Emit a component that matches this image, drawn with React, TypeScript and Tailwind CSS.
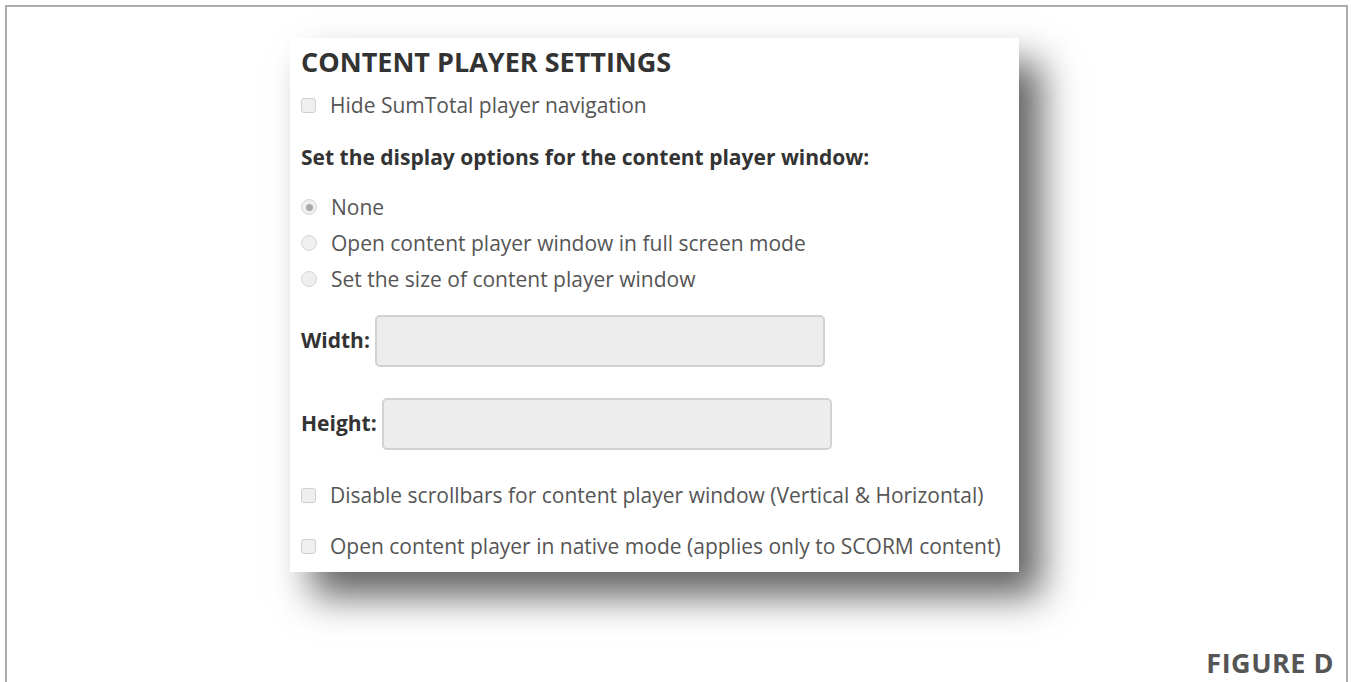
import React from "react";

// Checkbox drawn as a flat light square, like the disabled-looking browser control
function Box() {
  return (
    <span className="inline-block w-[15px] h-[15px] rounded-[3px] border border-[#cfcfcf] bg-[#efefef] shrink-0" />
  );
}

// Radio circle; the selected one gets a grey dot in the middle
function Radio({ checked }: { checked?: boolean }) {
  return (
    <span className="w-[16px] h-[16px] rounded-full border border-[#d6d6d6] bg-[#efefef] shrink-0 flex items-center justify-center">
      {checked && <span className="w-[7px] h-[7px] rounded-full bg-[#a9a9a9]" />}
    </span>
  );
}

const radios = [
  { label: "None", checked: true },
  { label: "Open content player window in full screen mode" },
  { label: "Set the size of content player window" },
];

export default function App() {
  return (
    <div
      className="w-[1351px] h-[682px] bg-white overflow-hidden pt-[5px] pl-[5px] pr-[3px]"
      style={{ fontFamily: '"Open Sans", "Noto Sans", Arial, sans-serif' }}
    >
      <div className="h-[690px] border-2 border-b-0 border-[#ababab] flex flex-col">
        <div className="ml-[283px] mt-[31px] w-[729px] h-[534px] bg-white shadow-[22px_24px_36px_rgba(0,0,0,0.62)] pl-[11px] pt-[8px]">
          <h1 className="text-[27px] leading-[32px] font-bold text-[#333]">CONTENT PLAYER SETTINGS</h1>

          <label className="mt-[13px] flex items-center gap-[14px] text-[21px] leading-[28px] text-[#555]">
            <Box />
            Hide SumTotal player navigation
          </label>

          <p className="mt-[24px] text-[21px] leading-[28px] font-bold text-[#333]">
            Set the display options for the content player window:
          </p>

          <div className="mt-[18px] flex flex-col">
            {radios.map((r) => (
              <label key={r.label} className="flex items-center gap-[14px] text-[21px] leading-[36px] text-[#555]">
                <Radio checked={r.checked} />
                {r.label}
              </label>
            ))}
          </div>

          <div className="mt-[18px] flex items-center gap-[5px]">
            <span className="text-[21px] font-bold text-[#333]">Width:</span>
            <div className="w-[450px] h-[52px] rounded-[5px] border-2 border-[#d2d2d2] bg-[#ededed]" />
          </div>

          <div className="mt-[31px] flex items-center gap-[5px]">
            <span className="text-[21px] font-bold text-[#333]">Height:</span>
            <div className="w-[450px] h-[52px] rounded-[5px] border-2 border-[#d2d2d2] bg-[#ededed]" />
          </div>

          <label className="mt-[31px] flex items-center gap-[14px] text-[21px] leading-[28px] text-[#555]">
            <Box />
            Disable scrollbars for content player window (Vertical &amp; Horizontal)
          </label>

          <label className="mt-[23px] flex items-center gap-[14px] text-[21px] leading-[28px] text-[#555]">
            <Box />
            Open content player in native mode (applies only to SCORM content)
          </label>
        </div>

        <div className="mt-[76px] flex justify-end pr-[12px]">
          <span className="text-[27px] leading-[30px] font-bold tracking-[0.5px] text-[#555]">FIGURE D</span>
        </div>
      </div>
    </div>
  );
}
